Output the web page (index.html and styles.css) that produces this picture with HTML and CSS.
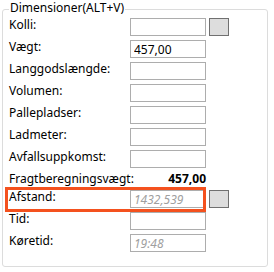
FILE: index.html
```html
<!DOCTYPE html>
<html lang="da">
<head>
<meta charset="utf-8">
<title>Dimensioner</title>
<link rel="stylesheet" href="styles.css">
</head>
<body>
<fieldset class="group">
  <legend class="group-title">Dimensioner(ALT+V)</legend>
  <div class="row"><span class="label">Kolli:</span><input class="field" type="text" value=""><button class="pick" type="button"></button></div>
  <div class="row"><span class="label">Vægt:</span><input class="field" type="text" value="457,00"></div>
  <div class="row"><span class="label">Langgodslængde:</span><input class="field" type="text" value=""></div>
  <div class="row"><span class="label">Volumen:</span><input class="field" type="text" value=""></div>
  <div class="row"><span class="label">Pallepladser:</span><input class="field" type="text" value=""></div>
  <div class="row"><span class="label">Ladmeter:</span><input class="field" type="text" value=""></div>
  <div class="row"><span class="label">Avfallsuppkomst:</span><input class="field" type="text" value=""></div>
  <div class="row row-short"><span class="label">Fragtberegningsvægt:</span><span class="total">457,00</span></div>
  <div class="row row-highlight"><span class="label">Afstand:</span><input class="field field-muted" type="text" value="1432,539" readonly><button class="pick" type="button"></button></div>
  <div class="row"><span class="label">Tid:</span><input class="field" type="text" value=""></div>
  <div class="row"><span class="label">Køretid:</span><input class="field field-muted" type="text" value="19:48" readonly></div>
</fieldset>
</body>
</html>
```

FILE: styles.css
```css
html, body {
  margin: 0;
  padding: 0;
  background: #ffffff;
}

body {
  font-family: "Noto Sans", "Liberation Sans", sans-serif;
  font-size: 12px;
  color: #000000;
}

.group {
  box-sizing: border-box;
  width: 266px;
  margin: 1px 0 0 2px;
  padding: 0 6px 10px 6px;
  border: 1px solid #dcdcdc;
  border-radius: 3px;
  min-inline-size: 0;
}

.group-title {
  padding: 0 1px 3px 1px;
  line-height: 14px;
  color: #000000;
}

.row {
  display: grid;
  grid-template-columns: 118px 76px 20px;
  column-gap: 3px;
  align-items: start;
  height: 22px;
}

.row-short {
  height: 18px;
}

.label {
  line-height: 14px;
  white-space: nowrap;
}

.field {
  box-sizing: border-box;
  width: 76px;
  height: 18px;
  margin: 0;
  padding: 0 3px;
  border: 1px solid #adadad;
  border-radius: 0;
  background: #ffffff;
  font: inherit;
  line-height: 16px;
  color: #000000;
  outline: none;
}

.field-muted {
  font-style: italic;
  color: #a0a0a0;
}

.pick {
  box-sizing: border-box;
  width: 20px;
  height: 18px;
  margin: 0;
  padding: 0;
  border: 1px solid #707070;
  border-radius: 0;
  background: #dddddd;
}

.total {
  grid-column: 2;
  text-align: right;
  font-weight: bold;
  line-height: 14px;
}

.row-highlight {
  position: relative;
}

.row-highlight::after {
  content: "";
  position: absolute;
  left: -4px;
  top: -3px;
  width: 201px;
  height: 25px;
  box-sizing: border-box;
  border: 3px solid #f4511e;
  pointer-events: none;
}
```
